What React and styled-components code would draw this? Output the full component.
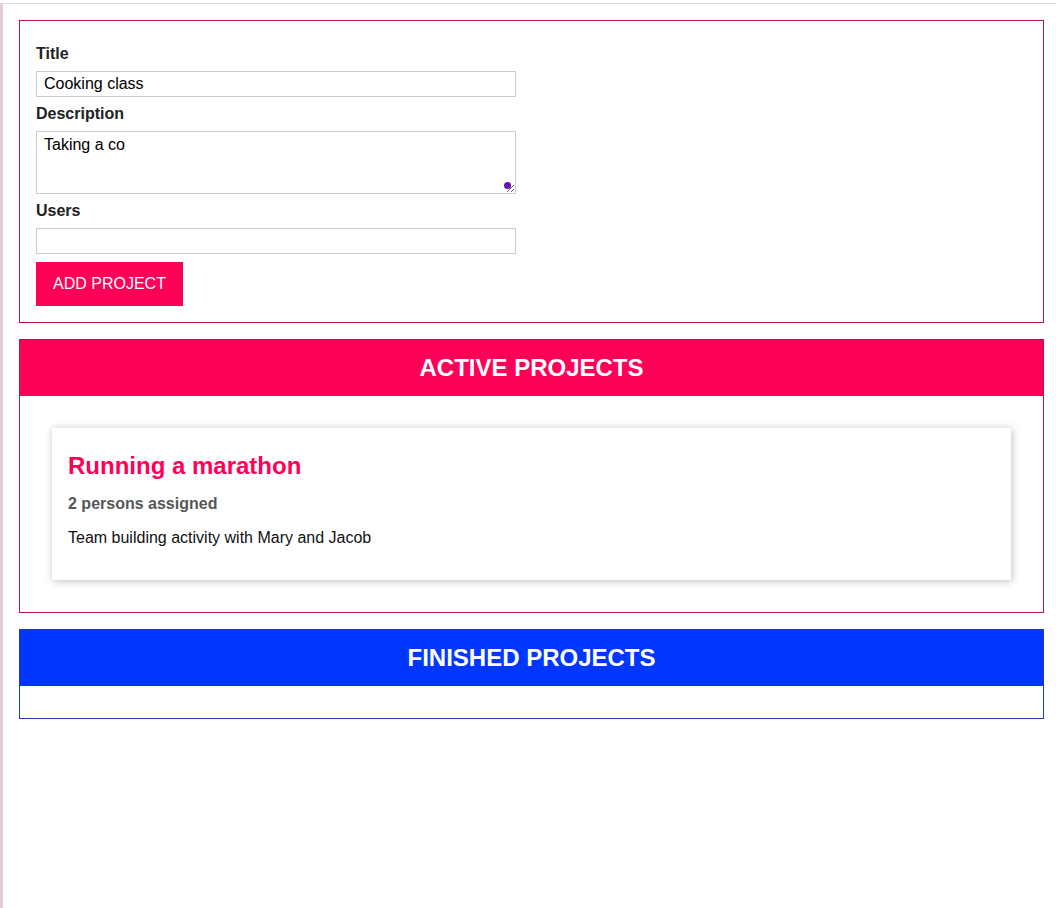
import React from 'react';
import styled, { createGlobalStyle } from 'styled-components';

const GlobalStyle = createGlobalStyle`
    html, body {
        margin: 0;
        padding: 0;
        background: #fff;
    }
    body {
        font-family: "Liberation Sans", Arial, sans-serif;
        font-size: 16px;
        color: #000;
    }
    * {
        box-sizing: border-box;
    }
`;

const Page = styled.div`
    min-height: 908px;
    border-left: 3px solid #e4ccd5;
`;

const TopRule = styled.div`
    height: 1px;
    margin-top: 3px;
    background: #dcdcdc;
`;

const Panel = styled.section`
    margin: 16px 12px 16px 16px;
    border: 1px solid ${p => p.$border};
`;

const Form = styled.form`
    display: flex;
    flex-direction: column;
    align-items: flex-start;
    padding: 23px 16px 16px;
`;

const Label = styled.label`
    display: block;
    margin-bottom: 8px;
    font-weight: bold;
    line-height: 19px;
    color: #222;
`;

const Input = styled.input`
    display: block;
    width: 480px;
    height: 26px;
    margin: 0 0 7px;
    padding: 2px 7px;
    font: inherit;
    border: 1px solid #ccc;
    outline: none;
`;

const AreaWrap = styled.div`
    position: relative;
    width: 480px;
    margin-bottom: 7px;
`;

const TextArea = styled.textarea`
    display: block;
    width: 480px;
    height: 63px;
    margin: 0;
    padding: 4px 7px;
    font: inherit;
    line-height: 18px;
    border: 1px solid #ccc;
    outline: none;
`;

const Cursor = styled.span`
    position: absolute;
    right: 5px;
    bottom: 5px;
    width: 7px;
    height: 7px;
    border-radius: 50%;
    background: #6a12b0;
    pointer-events: none;
`;

const Button = styled.button`
    margin-top: 1px;
    height: 44px;
    padding: 0 17px;
    font: inherit;
    color: #fff;
    background: #ff0058;
    border: none;
    cursor: pointer;
`;

const Header = styled.header`
    height: 56px;
    display: flex;
    align-items: center;
    justify-content: center;
    background: ${p => p.$color};

    h2 {
        margin: 0;
        color: #fff;
        font-size: 24px;
        font-weight: bold;
    }
`;

const List = styled.ul`
    list-style: none;
    margin: 0;
    padding: 16px;
`;

const Card = styled.li`
    margin: 16px;
    padding: 16px;
    background: #fff;
    box-shadow: 1px 1px 8px rgba(0, 0, 0, 0.26);

    h2 {
        margin: 8px 0 0;
        font-size: 24px;
        line-height: 28px;
        color: ${p => p.$color};
    }

    h3 {
        margin: 14px 0 0;
        font-size: 16px;
        line-height: 19px;
        color: #575757;
    }

    p {
        margin: 15px 0 16px;
        line-height: 20px;
        color: #111;
    }
`;

const projects = [
    {
        id: 'p1',
        title: 'Running a marathon',
        people: 2,
        description: 'Team building activity with Mary and Jacob',
    },
];

function ProjectList({ title, color, border, items }) {
    return (
        <Panel $border={border}>
            <Header $color={color}>
                <h2>{title}</h2>
            </Header>
            <List>
                {items.map(prj => (
                    <Card key={prj.id} $color={color}>
                        <h2>{prj.title}</h2>
                        <h3>{prj.people} persons assigned</h3>
                        <p>{prj.description}</p>
                    </Card>
                ))}
            </List>
        </Panel>
    );
}

export default function App() {
    return (
        <Page>
            <GlobalStyle />
            <TopRule />
            <Panel $border="#b4184f">
                <Form onSubmit={e => e.preventDefault()}>
                    <Label htmlFor="title">Title</Label>
                    <Input id="title" type="text" defaultValue="Cooking class" />
                    <Label htmlFor="description">Description</Label>
                    <AreaWrap>
                        <TextArea id="description" defaultValue="Taking a co" />
                        <Cursor />
                    </AreaWrap>
                    <Label htmlFor="people">Users</Label>
                    <Input id="people" type="number" />
                    <Button type="submit">ADD PROJECT</Button>
                </Form>
            </Panel>
            <ProjectList title="ACTIVE PROJECTS" color="#ff0058" border="#b4184f" items={projects} />
            <ProjectList title="FINISHED PROJECTS" color="#0037ff" border="#1f40b0" items={[]} />
        </Page>
    );
}
